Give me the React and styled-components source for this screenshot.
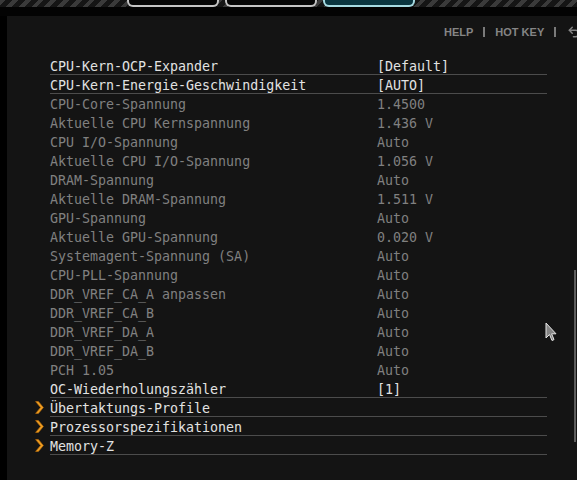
import React from 'react'
import styled, { createGlobalStyle } from 'styled-components'
import { Undo2 } from 'lucide-react'

const Global = createGlobalStyle`
  body {
    margin: 0;
    background: #000;
  }
`
const Page = styled.div`
  width: 577px;
  height: 480px;
  background: #000;
  display: flex;
  flex-direction: column;
  overflow: hidden;
  position: relative;
`
const TopBar = styled.div`
  height: 16px;
  flex-shrink: 0;
  background:
    repeating-linear-gradient(135deg, #3a3a3a 0 4px, #151515 4px 9px) top / 100% 7px no-repeat,
    #030303;
  display: flex;
  gap: 6px;
  padding-left: 127px;
`
const Tab = styled.div`
  width: 88px;
  height: 5px;
  border: 2px solid ${p => (p.$active ? '#a6dbe2' : '#c4c4c4')};
  border-top: none;
  border-radius: 0 0 6px 6px;
  background: ${p => (p.$active ? '#0a3640' : '#050505')};
`
const Body = styled.div`
  flex: 1;
  display: flex;
  padding-left: 7px;
  min-height: 0;
`
const Panel = styled.div`
  flex: 1;
  background: #141414;
  display: flex;
  overflow: hidden;
`
const Main = styled.div`
  flex: 1;
  display: flex;
  flex-direction: column;
  min-width: 0;
`
const Header = styled.div`
  height: 40px;
  display: flex;
  align-items: center;
  gap: 10px;
  padding: 0 0 8px 437px;
  box-sizing: border-box;
  font-family: 'Liberation Sans', Arial, sans-serif;
  font-weight: 700;
  font-size: 11px;
  color: #858585;
  white-space: nowrap;
`
const Sep = styled.span`
  width: 2px;
  height: 10px;
  background: #7a7a7a;
  flex-shrink: 0;
`
const IconWrap = styled.span`
  display: flex;
  flex-shrink: 0;
  margin-left: 1px;
`
const List = styled.div`
  display: flex;
  flex-direction: column;
  padding-left: 28px;
`
const Row = styled.div`
  display: flex;
  align-items: flex-start;
  height: 19px;
`
const Arrow = styled.span`
  width: 15px;
  height: 19px;
  display: flex;
  align-items: center;
  flex-shrink: 0;
`
const Line = styled.div`
  width: 497px;
  height: 19px;
  box-sizing: border-box;
  display: flex;
  align-items: flex-start;
  padding-top: 3px;
  border-bottom: 1px solid ${p => (p.$underline ? '#4c4c4c' : 'transparent')};
  font-family: 'DejaVu Sans Mono', 'Liberation Mono', monospace;
  font-size: 13.3px;
  line-height: 15px;
  color: ${p => (p.$dim ? '#808080' : '#e2e2e2')};
  white-space: pre;
`
const Name = styled.span`
  width: 327px;
  flex-shrink: 0;
`
const Value = styled.span``
const Scroll = styled.div`
  width: 2px;
  height: 172px;
  margin: 254px 1px 0 0;
  background: #5e5e5e;
  flex-shrink: 0;
`
const Cursor = styled.svg`
  position: absolute;
  left: 545px;
  top: 322px;
`

const rows = [
  ['CPU-Kern-OCP-Expander', '[Default]', 'item'],
  ['CPU-Kern-Energie-Geschwindigkeit', '[AUTO]', 'item'],
  ['CPU-Core-Spannung', '1.4500', 'dim'],
  ['Aktuelle CPU Kernspannung', '1.436 V', 'dim'],
  ['CPU I/O-Spannung', 'Auto', 'dim'],
  ['Aktuelle CPU I/O-Spannung', '1.056 V', 'dim'],
  ['DRAM-Spannung', 'Auto', 'dim'],
  ['Aktuelle DRAM-Spannung', '1.511 V', 'dim'],
  ['GPU-Spannung', 'Auto', 'dim'],
  ['Aktuelle GPU-Spannung', '0.020 V', 'dim'],
  ['Systemagent-Spannung (SA)', 'Auto', 'dim'],
  ['CPU-PLL-Spannung', 'Auto', 'dim'],
  ['DDR_VREF_CA_A anpassen', 'Auto', 'dim'],
  ['DDR_VREF_CA_B', 'Auto', 'dim'],
  ['DDR_VREF_DA_A', 'Auto', 'dim'],
  ['DDR_VREF_DA_B', 'Auto', 'dim'],
  ['PCH 1.05', 'Auto', 'dim'],
  ['OC-Wiederholungszähler', '[1]', 'item'],
  ['Übertaktungs-Profile', '', 'sub'],
  ['Prozessorspezifikationen', '', 'sub'],
  ['Memory-Z', '', 'sub'],
]

function Chevron() {
  return (
    <svg width="9" height="13" viewBox="0 0 9 13">
      <path d="M0.6 0.6 L3.4 0.6 L8.4 6.5 L3.4 12.4 L0.6 12.4 L5.6 6.5 Z" fill="#f0a024" stroke="#b86c0a" strokeWidth="0.7" />
    </svg>
  )
}

export default function App() {
  return (
    <>
      <Global />
      <Page>
        <TopBar>
          <Tab />
          <Tab />
          <Tab $active />
        </TopBar>
        <Body>
          <Panel>
            <Main>
              <Header>
                <span>HELP</span>
                <Sep />
                <span>HOT KEY</span>
                <Sep />
                <IconWrap>
                  <Undo2 size={14} strokeWidth={2.5} color="#858585" />
                </IconWrap>
              </Header>
              <List>
                {rows.map(([name, value, kind]) => (
                  <Row key={name}>
                    <Arrow>{kind === 'sub' && <Chevron />}</Arrow>
                    <Line $dim={kind === 'dim'} $underline={kind !== 'dim'}>
                      <Name>{name}</Name>
                      <Value>{value}</Value>
                    </Line>
                  </Row>
                ))}
              </List>
            </Main>
            <Scroll />
          </Panel>
        </Body>
        <Cursor width="12" height="21" viewBox="0 0 12 21">
          <path d="M1 1 L1 16 L4.5 12.5 L7 18.5 L9 17.6 L6.6 11.8 L11 11.8 Z" fill="#858585" stroke="#e6e6e6" strokeWidth="1" />
        </Cursor>
      </Page>
    </>
  )
}
